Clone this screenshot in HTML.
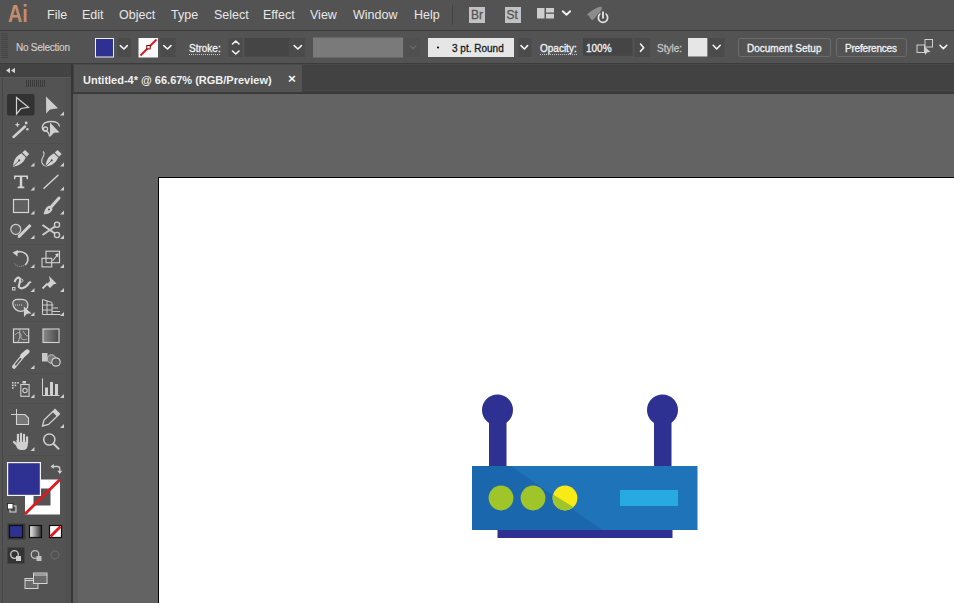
<!DOCTYPE html>
<html><head><meta charset="utf-8">
<style>
*{box-sizing:border-box;margin:0;padding:0}
html,body{width:954px;height:603px;overflow:hidden;background:#535353;font-family:"Liberation Sans",sans-serif;position:relative}
.a{position:absolute}
.t{position:absolute;white-space:nowrap;line-height:15px}
#menubar{left:0;top:0;width:954px;height:30px;background:#535353}
#menuline{left:0;top:30px;width:954px;height:1px;background:#3a3a3a}
.m{font-size:12.5px;color:#e8e8e8;top:8px}
#optbar{left:0;top:31px;width:954px;height:33px;background:#535353;border-bottom:1px solid #3c3c3c}
.o{font-size:10px;color:#f2f2f2;-webkit-text-stroke:0.3px currentColor}
.dd{position:absolute;top:38px;height:19px;background:#474747}
.chev{position:absolute}
#toolbar{left:0;top:64px;width:72px;height:539px;background:#535353}
#tbhead{left:0;top:64px;width:72px;height:13px;background:#474747}
#tabbar{left:73px;top:64px;width:882px;height:30px;background:#424242}
#tab{left:74px;top:65px;width:228px;height:27px;background:#535353}
#canvas{left:78px;top:94px;width:876px;height:509px;background:#636363}
#artboard{left:158px;top:177px;width:796px;height:426px;background:#fff;border-left:1px solid #000;border-top:1px solid #000}
</style></head><body>
<div id="menubar" class="a"></div>
<div id="menuline" class="a"></div>
<!-- Ai logo -->
<div class="t" style="left:8px;top:2px;font-size:23px;line-height:24px;color:#c48e6e;font-weight:bold;transform:scaleX(0.86);transform-origin:0 0">Ai</div>
<div class="t m" style="left:47px">File</div>
<div class="t m" style="left:82px">Edit</div>
<div class="t m" style="left:119px">Object</div>
<div class="t m" style="left:171px">Type</div>
<div class="t m" style="left:214px">Select</div>
<div class="t m" style="left:263px">Effect</div>
<div class="t m" style="left:310px">View</div>
<div class="t m" style="left:353px">Window</div>
<div class="t m" style="left:414px">Help</div>
<div class="a" style="left:452px;top:5px;width:1px;height:20px;background:#444"></div>
<div class="a" style="left:469px;top:7px;width:16px;height:16px;background:#c2c2c2"></div>
<div class="t" style="left:471px;top:8px;font-size:12px;line-height:15px;color:#555;font-weight:normal;-webkit-text-stroke:0.3px #555">Br</div>
<div class="a" style="left:505px;top:7px;width:16px;height:16px;background:#c2c2c2"></div>
<div class="t" style="left:506.5px;top:8px;font-size:12px;line-height:15px;color:#555;font-weight:normal;-webkit-text-stroke:0.3px #555">St</div>
<svg class="a" style="left:530px;top:0" width="90" height="28" viewBox="530 0 90 28">
 <g fill="#cdcdcd">
  <rect x="537" y="8" width="7.5" height="10.5"/>
  <rect x="546" y="8" width="8" height="4.5"/>
  <rect x="546" y="13.8" width="8" height="4.7"/>
 </g>
 <path d="M562.8 11.3 L566.5 14.8 L570.2 11.3" fill="none" stroke="#f0f0f0" stroke-width="1.9" stroke-linecap="round" stroke-linejoin="round"/>
 <path d="M587 14.5 C591 10.5 596 7.5 601.5 6.5 C602.5 9 601 12 598 14 L593 20 C591 20 590 18 589.5 16.5 Z" fill="#8c8c8c"/>
 <circle cx="603" cy="17.7" r="4.6" fill="#535353" stroke="#e0e0e0" stroke-width="1.8"/>
 <rect x="600.5" y="11" width="5" height="5.5" fill="#535353"/>
 <path d="M603 11.5 V18.5" stroke="#e8e8e8" stroke-width="1.8"/>
</svg>
<div id="optbar" class="a"></div>
<svg class="a" style="left:0;top:30px" width="954" height="34" viewBox="0 30 954 34">
 <!-- grip -->
 <g fill="#434343"><rect x="1" y="33" width="7" height="1"/><rect x="1" y="35" width="7" height="1"/><rect x="1" y="37" width="7" height="1"/><rect x="1" y="39" width="7" height="1"/><rect x="1" y="41" width="7" height="1"/><rect x="1" y="43" width="7" height="1"/><rect x="1" y="45" width="7" height="1"/><rect x="1" y="47" width="7" height="1"/><rect x="1" y="49" width="7" height="1"/><rect x="1" y="51" width="7" height="1"/><rect x="1" y="53" width="7" height="1"/><rect x="1" y="55" width="7" height="1"/><rect x="1" y="57" width="7" height="1"/></g>
 <!-- fill swatch -->
 <rect x="95.5" y="38.5" width="18" height="18.5" fill="#2e3192" stroke="#eeeef6" stroke-width="1"/>
 <rect x="117.5" y="38" width="13.5" height="19" fill="#4b4b4b"/>
 <!-- stroke swatch -->
 <rect x="138.5" y="38" width="19.5" height="19.5" fill="#fafafa"/>
 <path d="M140.5 55.5 L156.5 39.5" stroke="#d9141c" stroke-width="1.8"/>
 <rect x="146.8" y="45.5" width="3.4" height="3.4" fill="#fff" stroke="#8a0000" stroke-width="1"/>
 <rect x="160.5" y="38" width="15" height="19" fill="#4b4b4b"/>
 <!-- stroke label underline -->
 <path d="M189 54.5 H221" stroke="#c8c8c8" stroke-width="1" stroke-dasharray="1 1"/>
 <!-- spinner -->
 <rect x="228.5" y="38" width="14" height="19" fill="#4b4b4b"/>
 <rect x="244.5" y="38" width="45" height="18.5" fill="#454545"/>
 <rect x="290" y="38" width="15" height="19" fill="#4b4b4b"/>
 <!-- gray disabled field -->
 <rect x="313" y="37.5" width="90" height="20" fill="#7a7a7a"/>
 <rect x="405" y="38" width="15" height="19" fill="#505050"/>
 <!-- 3pt round -->
 <rect x="428" y="38" width="86" height="19" fill="#e6e6e6"/>
 <circle cx="438" cy="47.5" r="1.1" fill="#111"/>
 <rect x="518" y="38" width="13.5" height="19" fill="#4b4b4b"/>
 <path d="M540 54.5 H577" stroke="#c8c8c8" stroke-width="1" stroke-dasharray="1 1"/>
 <rect x="583" y="38.3" width="49.5" height="17.5" fill="#454545"/>
 <rect x="634.5" y="38" width="15.5" height="19" fill="#4b4b4b"/>
 <rect x="688" y="38" width="19.3" height="18.5" fill="#e6e6e6"/>
 <rect x="708.5" y="38" width="16" height="19" fill="#4b4b4b"/>
 <!-- buttons -->
 <rect x="738.5" y="38.5" width="92" height="18" rx="2" fill="none" stroke="#6c6c6c" stroke-width="1"/>
 <rect x="836.5" y="38.5" width="70" height="18" rx="2" fill="none" stroke="#6c6c6c" stroke-width="1"/>
 <!-- chevrons -->
 <g fill="none" stroke="#f4f4f4" stroke-width="1.6" stroke-linecap="round" stroke-linejoin="round">
  <path d="M120.3 45.6 L124 49 L127.3 45.6"/>
  <path d="M163.8 45.6 L167.5 49 L171 45.6"/>
  <path d="M232.5 44 L235.8 41 L239 44"/>
  <path d="M232.5 51 L235.8 54 L239 51"/>
  <path d="M294.2 45.6 L297.9 49 L301.4 45.6"/>
  <path d="M521 45.6 L524.4 49 L527.6 45.6"/>
  <path d="M640.5 44 L643.7 47.7 L640.5 51.3"/>
  <path d="M713.2 45.3 L716.7 49 L720.2 45.3"/>
  <path d="M940 45.3 L943.4 48.6 L946.8 45.3"/>
 </g>
 <path d="M409.7 45.6 L413 48.8 L416.3 45.6" fill="none" stroke="#6a6a6a" stroke-width="1.2"/>
 <!-- transform icon -->
 <g fill="none" stroke="#cfcfcf" stroke-width="1">
  <rect x="917" y="45" width="7.5" height="7.5"/>
  <rect x="925" y="39.5" width="7.5" height="7.5"/>
 </g>
 <path d="M924.5 46.5 L930.5 52 L927.3 52.2 L925 55Z" fill="#cfcfcf"/>
</svg>
<div class="t o" style="left:16px;top:39.5px;letter-spacing:-0.25px;color:#cfcfcf;-webkit-text-stroke:0.15px #cfcfcf">No Selection</div>
<div class="t o" style="left:189px;top:41.3px">Stroke:</div>
<div class="t o" style="left:452px;top:41.3px;color:#1a1a1a">3 pt. Round</div>
<div class="t o" style="left:540px;top:41.3px">Opacity:</div>
<div class="t o" style="left:586px;top:41.3px">100%</div>
<div class="t o" style="left:657px;top:41.3px;color:#c4c4c4">Style:</div>
<div class="t o" style="left:747px;top:41px">Document Setup</div>
<div class="t o" style="left:845px;top:41px;letter-spacing:-0.2px">Preferences</div>

<div id="toolbar" class="a"></div>
<div id="tbhead" class="a"></div>
<div id="tabbar" class="a"></div>
<div class="a" style="left:73px;top:64px;width:881px;height:1px;background:#494949"></div>
<div class="a" style="left:73px;top:90px;width:881px;height:1px;background:#474747"></div>
<div class="a" style="left:73px;top:91px;width:881px;height:2px;background:#3d3d3d"></div>
<div id="tab" class="a"></div>
<div class="t" style="left:83px;top:73px;font-size:11px;font-weight:bold;color:#f0f0f0">Untitled-4* @ 66.67% (RGB/Preview)</div>
<div class="t" style="left:288px;top:71px;font-size:13.5px;font-weight:bold;color:#f4f4f4">&#215;</div>

<!-- toolbar details -->
<div class="a" style="left:0;top:64px;width:72px;height:13px;background:#434343"></div>
<div class="a" style="left:0;top:77px;width:72px;height:1px;background:#5a5a5a"></div>
<div class="a" style="left:65px;top:78px;width:6px;height:525px;background:#505050"></div>
<div class="a" style="left:71px;top:64px;width:2px;height:539px;background:#363636"></div>
<div class="a" style="left:73px;top:94px;width:5px;height:509px;background:#5b5b5b"></div>
<div class="a" style="left:73px;top:93px;width:881px;height:1px;background:#383838"></div>
<svg class="a" style="left:0;top:0" width="75" height="603" viewBox="0 0 75 603">
 <g fill="#d4d4d4" stroke="none">
  <path d="M6 70.5 L10 67.8 L10 73.2Z M11 70.5 L15 67.8 L15 73.2Z"/>
 </g>
 <g stroke="#3a3a3a" stroke-width="1">
  <path d="M26.5 80V87 M28.5 80V87 M30.5 80V87 M32.5 80V87 M34.5 80V87 M36.5 80V87 M38.5 80V87 M40.5 80V87 M42.5 80V87 M44.5 80V87"/>
 </g>
 <rect x="7" y="94" width="27.5" height="21.5" rx="2" fill="#323232"/>
 <!-- corner triangles -->
 <g fill="#cfcfcf">
  <path d="M64 111.5V115.5H60Z"/>
  <path d="M34.5 162.5V166.5H30.5Z"/><path d="M64 162.5V166.5H60Z"/>
  <path d="M34.5 186.5V190.5H30.5Z"/><path d="M64 186.5V190.5H60Z"/>
  <path d="M34.5 210.5V214.5H30.5Z"/><path d="M64 210.5V214.5H60Z"/>
  <path d="M34.5 235V239H30.5Z"/><path d="M64 235V239H60Z"/>
  <path d="M34.5 264V268H30.5Z"/><path d="M64 264V268H60Z"/>
  <path d="M34.5 288V292H30.5Z"/><path d="M64 288V292H60Z"/>
  <path d="M34.5 312V316H30.5Z"/><path d="M64 312V316H60Z"/>
  <path d="M34.5 365V369H30.5Z"/>
  <path d="M34.5 394V398H30.5Z"/><path d="M64 394V398H60Z"/>
  <path d="M64 424V428H60Z"/>
  <path d="M34.5 447V451H30.5Z"/>
 </g>
 <!-- separators -->
 <rect x="2" y="78" width="1" height="525" fill="#474747"/>
 <g fill="#4d4d4d">
  <rect x="8" y="143" width="56" height="1"/>
  <rect x="8" y="244" width="56" height="1"/>
  <rect x="8" y="321" width="56" height="1"/>
  <rect x="8" y="373" width="56" height="1"/>
  <rect x="8" y="403" width="56" height="1"/>
  <rect x="8" y="455" width="56" height="1"/>
 </g>
 <g fill="none" stroke="#d2d2d2" stroke-width="1.2" stroke-linejoin="miter">
  <!-- selection -->
  <path d="M16.5 97.5 L28.5 107.3 L21 108.5 L16.5 114 Z"/>
 </g>
 <g fill="#cdcdcd">
  <!-- direct selection -->
  <path d="M46 96.5 L58 108.3 L50 109.5 L46.2 113.5Z"/>
 </g>
 <!-- magic wand -->
 <g stroke="#d0d0d0" fill="#d0d0d0">
  <path d="M13.5 137 L25 126.5" stroke-width="2.4" stroke-linecap="round"/>
  <path d="M17.4 122 L18.2 124 L20.2 124.7 L18.2 125.4 L17.4 127.4 L16.6 125.4 L14.6 124.7 L16.6 124Z" stroke="none"/>
  <circle cx="26.2" cy="123" r="1.4" stroke="none"/>
  <circle cx="27.4" cy="129.3" r="1.2" stroke="none"/>
 </g>
 <!-- lasso -->
 <g fill="none" stroke="#cfcfcf" stroke-width="1.3">
  <path d="M49.5 136.5 C49 132 47.5 131 45 131 C42.5 131 42 128 42.5 126 C43.5 122.5 47 121.5 51.5 121.5 C56 121.5 59 123 59.5 126.5"/>
  <circle cx="45.5" cy="129" r="2"/>
 </g>
 <path d="M50 122.5 L59.5 132.5 L54 132.8 L50 137Z" fill="#d0d0d0"/>
 <!-- pen -->
 <g fill="#d2d2d2" transform="translate(0,0)">
  <path d="M13 166.7 C13.3 162 14.8 158.3 17.8 155.8 L21.4 153.2 L25.8 157.6 L23.6 161.2 C21 164.4 17.5 166 13 166.7Z"/>
  <path d="M22.3 152.6 L25 149.9 L29.2 154.1 L26.5 156.8Z"/>
  <path d="M13.6 166 L18.6 161" stroke="#535353" stroke-width="0.9"/>
  <circle cx="19.2" cy="160.4" r="1.1" fill="#535353"/>
 </g>
 <!-- curvature pen -->
 <g fill="#d2d2d2" transform="translate(32.5,0)">
  <path d="M13 166.7 C13.3 162 14.8 158.3 17.8 155.8 L21.4 153.2 L25.8 157.6 L23.6 161.2 C21 164.4 17.5 166 13 166.7Z"/>
  <path d="M22.3 152.6 L25 149.9 L29.2 154.1 L26.5 156.8Z"/>
  <path d="M13.6 166 L18.6 161" stroke="#535353" stroke-width="0.9"/>
  <circle cx="19.2" cy="160.4" r="1.1" fill="#535353"/>
 </g>
 <path d="M44.5 166 C41 163 41 160.5 42.5 158 C44 155.5 45 153 43 151.5" fill="none" stroke="#cfcfcf" stroke-width="1.1"/>
 <!-- type -->
 <path d="M14 175.5H28V179.3H26.8L26.3 177.1H22.2V186.6H24.3V188.2H17.7V186.6H19.8V177.1H15.7L15.2 179.3H14Z" fill="#d4d4d4"/>
 <!-- line -->
 <path d="M44 188.2 L58 175.2" stroke="#d0d0d0" stroke-width="1.5" stroke-linecap="round"/>
 <!-- rectangle -->
 <rect x="13.5" y="199.5" width="15" height="13" fill="#606060" stroke="#d6d6d6" stroke-width="1.2"/>
 <!-- paintbrush -->
 <path d="M59 198 L51.5 206.5" stroke="#d0d0d0" stroke-width="3" stroke-linecap="round"/>
 <path d="M49.3 205.5 L52.5 208.7 C52 212 49 214.2 43.5 214.3 C44.5 211 45.5 207 49.3 205.5Z" fill="#d0d0d0"/>
 <circle cx="49" cy="209.5" r="1" fill="#535353"/>
 <!-- shaper -->
 <circle cx="15.8" cy="229.3" r="5" fill="#5f5f5f" stroke="#cfcfcf" stroke-width="1.2"/>
 <path d="M18.5 237 L30.5 225" stroke="#d0d0d0" stroke-width="3"/>
 <path d="M17.5 238 L18.8 234.3 L21.2 236.7Z" fill="#d0d0d0"/>
 <!-- scissors -->
 <g fill="none" stroke="#d0d0d0" stroke-width="1.3">
  <circle cx="57" cy="224.7" r="2.6"/>
  <circle cx="57" cy="235" r="2.6"/>
 </g>
 <path d="M42.5 225 L55 233.5 M42.5 235 L55 226.5" stroke="#d0d0d0" stroke-width="1.8"/>
 <!-- rotate -->
 <path d="M14.5 253.5 C17 251 24 250.5 27 255.5 C29 259 27.5 263 25 265" fill="none" stroke="#d0d0d0" stroke-width="1.6"/>
 <path d="M12.5 252.5 L18 250 L17.5 256.5Z" fill="#d0d0d0"/>
 <path d="M24 265.5 C21 267 16.5 266.5 14.5 263.5" fill="none" stroke="#9a9a9a" stroke-width="1.2" stroke-dasharray="1 1"/>
 <!-- scale -->
 <g fill="none" stroke="#d4d4d4" stroke-width="1.1">
  <rect x="46" y="251.2" width="13.5" height="11.5"/>
  <rect x="42" y="258.3" width="9.7" height="8.6"/>
  <path d="M52.5 261 L58 254.2"/>
 </g>
 <path d="M58.5 253 L58.2 257.5 L55 254.5Z" fill="#d4d4d4"/>
 <!-- width / warp tool -->
 <path d="M14.5 282 C16 278 18.5 276 20 279 C21 282 18 285 19 287 C20.5 289.5 25 288 27.5 285 C29 283 30 281.5 30.5 283" fill="none" stroke="#d0d0d0" stroke-width="2.2"/>
 <circle cx="21.5" cy="280.5" r="1.5" fill="none" stroke="#d0d0d0" stroke-width="1"/>
 <rect x="12.5" y="287.5" width="2.5" height="2.5" fill="none" stroke="#d0d0d0" stroke-width="1"/>
 <!-- pin -->
 <path d="M49 276 L56.5 283.5 L53.5 284.5 L50 288 L46.5 284.5 L50 281 Z" fill="#d0d0d0"/>
 <path d="M42.5 288.5 L47.5 283.5" stroke="#d0d0d0" stroke-width="1.8"/>
 <!-- shape builder -->
 <path d="M13 305 C12 301 15 299 19 299.5 C23 299 26.5 300 27.5 303 C28.5 306 27 309 24 310.5 C20 312.5 14.5 310.5 13 305Z" fill="#5f5f5f" stroke="#cfcfcf" stroke-width="1.3"/>
 <g fill="#d8d8d8"><rect x="15" y="304.5" width="1" height="1"/><rect x="17" y="304.5" width="1" height="1"/><rect x="19" y="304.5" width="1" height="1"/><rect x="21" y="304.5" width="1" height="1"/></g>
 <path d="M23.8 306.5 L31.5 313.5 L27 313.8 L24 317Z" fill="#d0d0d0"/>
 <!-- perspective grid -->
 <g fill="none" stroke="#d0d0d0" stroke-width="1">
  <path d="M42.5 299.5 V314.5 H60.5 M42.5 299.5 L52 302.5 V314.5 M42.5 305 H53.5 M47 300.8 V314.5 M42.5 310 H52 M52 308 H58 M52 311.5 H60"/>
 </g>
 <!-- mesh -->
 <rect x="13.5" y="329" width="15.2" height="13.5" fill="#5a5a5a" stroke="#d4d4d4" stroke-width="1.2"/>
 <path d="M15 335 C18 331 22 333 21 336 C20 339 23 341 27 339 M20 329.5 C19 333 21 336 18 342 M23 331 C25 334 26 336 28 336" fill="none" stroke="#bdbdbd" stroke-width="0.9"/>
 <!-- gradient -->
 <defs><linearGradient id="gr" x1="0" x2="1"><stop offset="0" stop-color="#8a8a8a"/><stop offset="1" stop-color="#484848"/></linearGradient>
 <linearGradient id="gr2" x1="0" x2="1"><stop offset="0" stop-color="#f4f4f4"/><stop offset="1" stop-color="#2a2a2a"/></linearGradient></defs>
 <rect x="43" y="329" width="16" height="13.5" fill="url(#gr)" stroke="#d4d4d4" stroke-width="1.1"/>
 <!-- eyedropper -->
 <path d="M14 366.8 L22 357" stroke="#d0d0d0" stroke-width="4" stroke-linecap="round"/>
 <path d="M15.3 365.2 L21 358.3" stroke="#535353" stroke-width="1.7"/>
 <path d="M22.5 355.8 L27.3 351.6" stroke="#d6d6d6" stroke-width="4.6" stroke-linecap="round"/>
 <!-- blend -->
 <rect x="42" y="353" width="5.5" height="8.5" fill="#c8c8c8"/>
 <circle cx="51.5" cy="359" r="4.3" fill="#7a7a7a" stroke="#c8c8c8" stroke-width="1"/>
 <circle cx="56" cy="362" r="4.2" fill="#595959" stroke="#d0d0d0" stroke-width="1.2"/>
 <!-- symbol sprayer -->
 <g fill="#cfcfcf">
  <rect x="12" y="382" width="1.6" height="1.6"/><rect x="14.6" y="382" width="1.6" height="1.6"/><rect x="17.2" y="382" width="1.6" height="1.6"/>
  <rect x="12" y="384.6" width="1.6" height="1.6"/><rect x="14.6" y="384.6" width="1.6" height="1.6"/>
  <rect x="12" y="387.2" width="1.6" height="1.6"/>
  <rect x="22.5" y="381" width="3.5" height="2.5"/>
 </g>
 <rect x="20.8" y="384.5" width="8.3" height="11.8" fill="none" stroke="#d0d0d0" stroke-width="1.1"/>
 <circle cx="25" cy="390.5" r="2.2" fill="none" stroke="#d0d0d0" stroke-width="1.1"/>
 <!-- column graph -->
 <path d="M42.5 378.5 V395.5 H59.5" fill="none" stroke="#d0d0d0" stroke-width="1"/>
 <g fill="#d0d0d0"><rect x="45" y="387.5" width="3" height="8"/><rect x="50" y="382" width="3" height="13.5"/><rect x="55" y="384" width="3" height="11.5"/></g>
 <!-- artboard -->
 <path d="M11 414.5 H17 M16.5 409 V415" stroke="#d0d0d0" stroke-width="1"/>
 <path d="M16.5 414.5 H25 L28.5 418 V424.5 H16.5Z" fill="#777" stroke="#d4d4d4" stroke-width="1.1"/>
 <!-- pencil -->
 <path d="M42.5 426 L44 420 L55 409.5 L59.5 414 L48.5 424.5Z" fill="none" stroke="#d0d0d0" stroke-width="1.3"/>
 <path d="M52.5 412 L55 409.5 L59.5 414 L57 416.5Z" fill="#d0d0d0"/>
 <!-- hand -->
 <path d="M16.5 441.5 L16.5 447 C17.5 449.5 19.5 450 23 450 C26 450 27.5 448 27.8 445 L28 440 L16.5 440Z" fill="#d0d0d0"/>
 <g stroke="#d0d0d0" stroke-width="2.3" stroke-linecap="round">
  <path d="M18 443 V435"/><path d="M21 442 V434"/><path d="M24 442 V434.8"/><path d="M27 443 V437.5"/>
  <path d="M14 442 L17.5 445.5"/>
 </g>
 <g stroke="#535353" stroke-width="0.7">
  <path d="M19.5 442 V434.5"/><path d="M22.5 442 V434.5"/><path d="M25.5 442 V436"/>
 </g>
 <!-- zoom -->
 <circle cx="49.3" cy="439.5" r="5.6" fill="none" stroke="#d0d0d0" stroke-width="1.5"/>
 <path d="M53.5 443.8 L59 449.3" stroke="#d0d0d0" stroke-width="2"/>
 <!-- fill/stroke -->
 <rect x="25" y="479.5" width="35" height="35" fill="#fff"/>
 <rect x="33.5" y="488.5" width="17" height="17" fill="#535353"/>
 <path d="M25 514 L60 479.5" stroke="#e0171f" stroke-width="2.8"/>
 <rect x="7" y="462" width="34" height="34" fill="#f4f4f4"/>
 <rect x="8.2" y="463.2" width="31.6" height="31.6" fill="#2e3192"/>
 <!-- swap arrows -->
 <path d="M53 466.5 H57.5 C59 466.5 59.8 467.3 59.8 468.8 V471" fill="none" stroke="#cfcfcf" stroke-width="1.3"/>
 <path d="M50.5 466.5 L53.8 464 V469Z M59.8 474 L57.3 470.7 H62.3Z" fill="#cfcfcf"/>
 <!-- default fill/stroke -->
 <rect x="10" y="506" width="6" height="6" fill="none" stroke="#d0d0d0" stroke-width="1.1"/>
 <rect x="7.5" y="503.5" width="5.5" height="5.5" fill="#fff" stroke="#222" stroke-width="0.8"/>
 <!-- color/gradient/none -->
 <rect x="7.5" y="523.5" width="18" height="16" fill="#3a3a3a"/>
 <rect x="9.5" y="525.5" width="13" height="12" fill="#2e3192" stroke="#111" stroke-width="1.2"/>
 <rect x="29.5" y="525.5" width="12" height="12" fill="url(#gr2)" stroke="#111" stroke-width="1.2"/>
 <rect x="49.5" y="525.5" width="12" height="12" fill="#fff" stroke="#111" stroke-width="1.2"/>
 <path d="M50.5 536.5 L60.5 526.5" stroke="#e0171f" stroke-width="2.8"/>
 <!-- draw modes -->
 <rect x="7.5" y="547.5" width="17" height="16" fill="#343434"/>
 <circle cx="14.5" cy="554.5" r="3.8" fill="none" stroke="#d0d0d0" stroke-width="1.3"/>
 <rect x="16" y="556" width="5" height="5" fill="#d0d0d0"/>
 <circle cx="35" cy="554.5" r="3.8" fill="none" stroke="#c0c0c0" stroke-width="1.3"/>
 <rect x="36.5" y="556" width="5" height="5" fill="#c0c0c0"/>
 <circle cx="55" cy="555" r="4" fill="none" stroke="#666" stroke-width="1.3"/>
 <!-- screen mode -->
 <rect x="25" y="578.5" width="13" height="10" fill="#6a6a6a" stroke="#d4d4d4" stroke-width="1"/>
 <rect x="33.5" y="573" width="13.5" height="10.5" fill="#6a6a6a" stroke="#d4d4d4" stroke-width="1"/>
 <path d="M33.5 575 H47" stroke="#d4d4d4" stroke-width="1"/>
 <path d="M25 580.5 H33.5" stroke="#d4d4d4" stroke-width="1"/>
</svg>

<div id="canvas" class="a"></div>
<div id="artboard" class="a"></div>

<!-- router -->
<svg class="a" style="left:0;top:0" width="954" height="603" viewBox="0 0 954 603">
  <circle cx="497.5" cy="410" r="15.5" fill="#2e3192"/>
  <rect x="489" y="412" width="17.5" height="56" fill="#2e3192"/>
  <circle cx="662.5" cy="410" r="15.5" fill="#2e3192"/>
  <rect x="654" y="412" width="17.5" height="56" fill="#2e3192"/>
  <rect x="497.5" y="528" width="175" height="10" fill="#2e3192"/>
  <rect x="472" y="466" width="225.5" height="64" fill="#1f74b9"/>
  <polygon points="472,466 511,466 602,530 472,530" fill="#1b67ae"/>
  <circle cx="501" cy="498" r="12.4" fill="#9fc52a"/>
  <circle cx="533" cy="498" r="12.4" fill="#9fc52a"/>
  <circle cx="565" cy="498" r="12.4" fill="#f7ea17"/>
  <clipPath id="c3"><circle cx="565" cy="498" r="12.4"/></clipPath>
  <polygon clip-path="url(#c3)" points="545,483 553.8,495 573.5,506.9 590,517 545,520" fill="#9fc52a"/>
  <rect x="620" y="490" width="58" height="16" fill="#27aae1"/>
</svg>
</body></html>
